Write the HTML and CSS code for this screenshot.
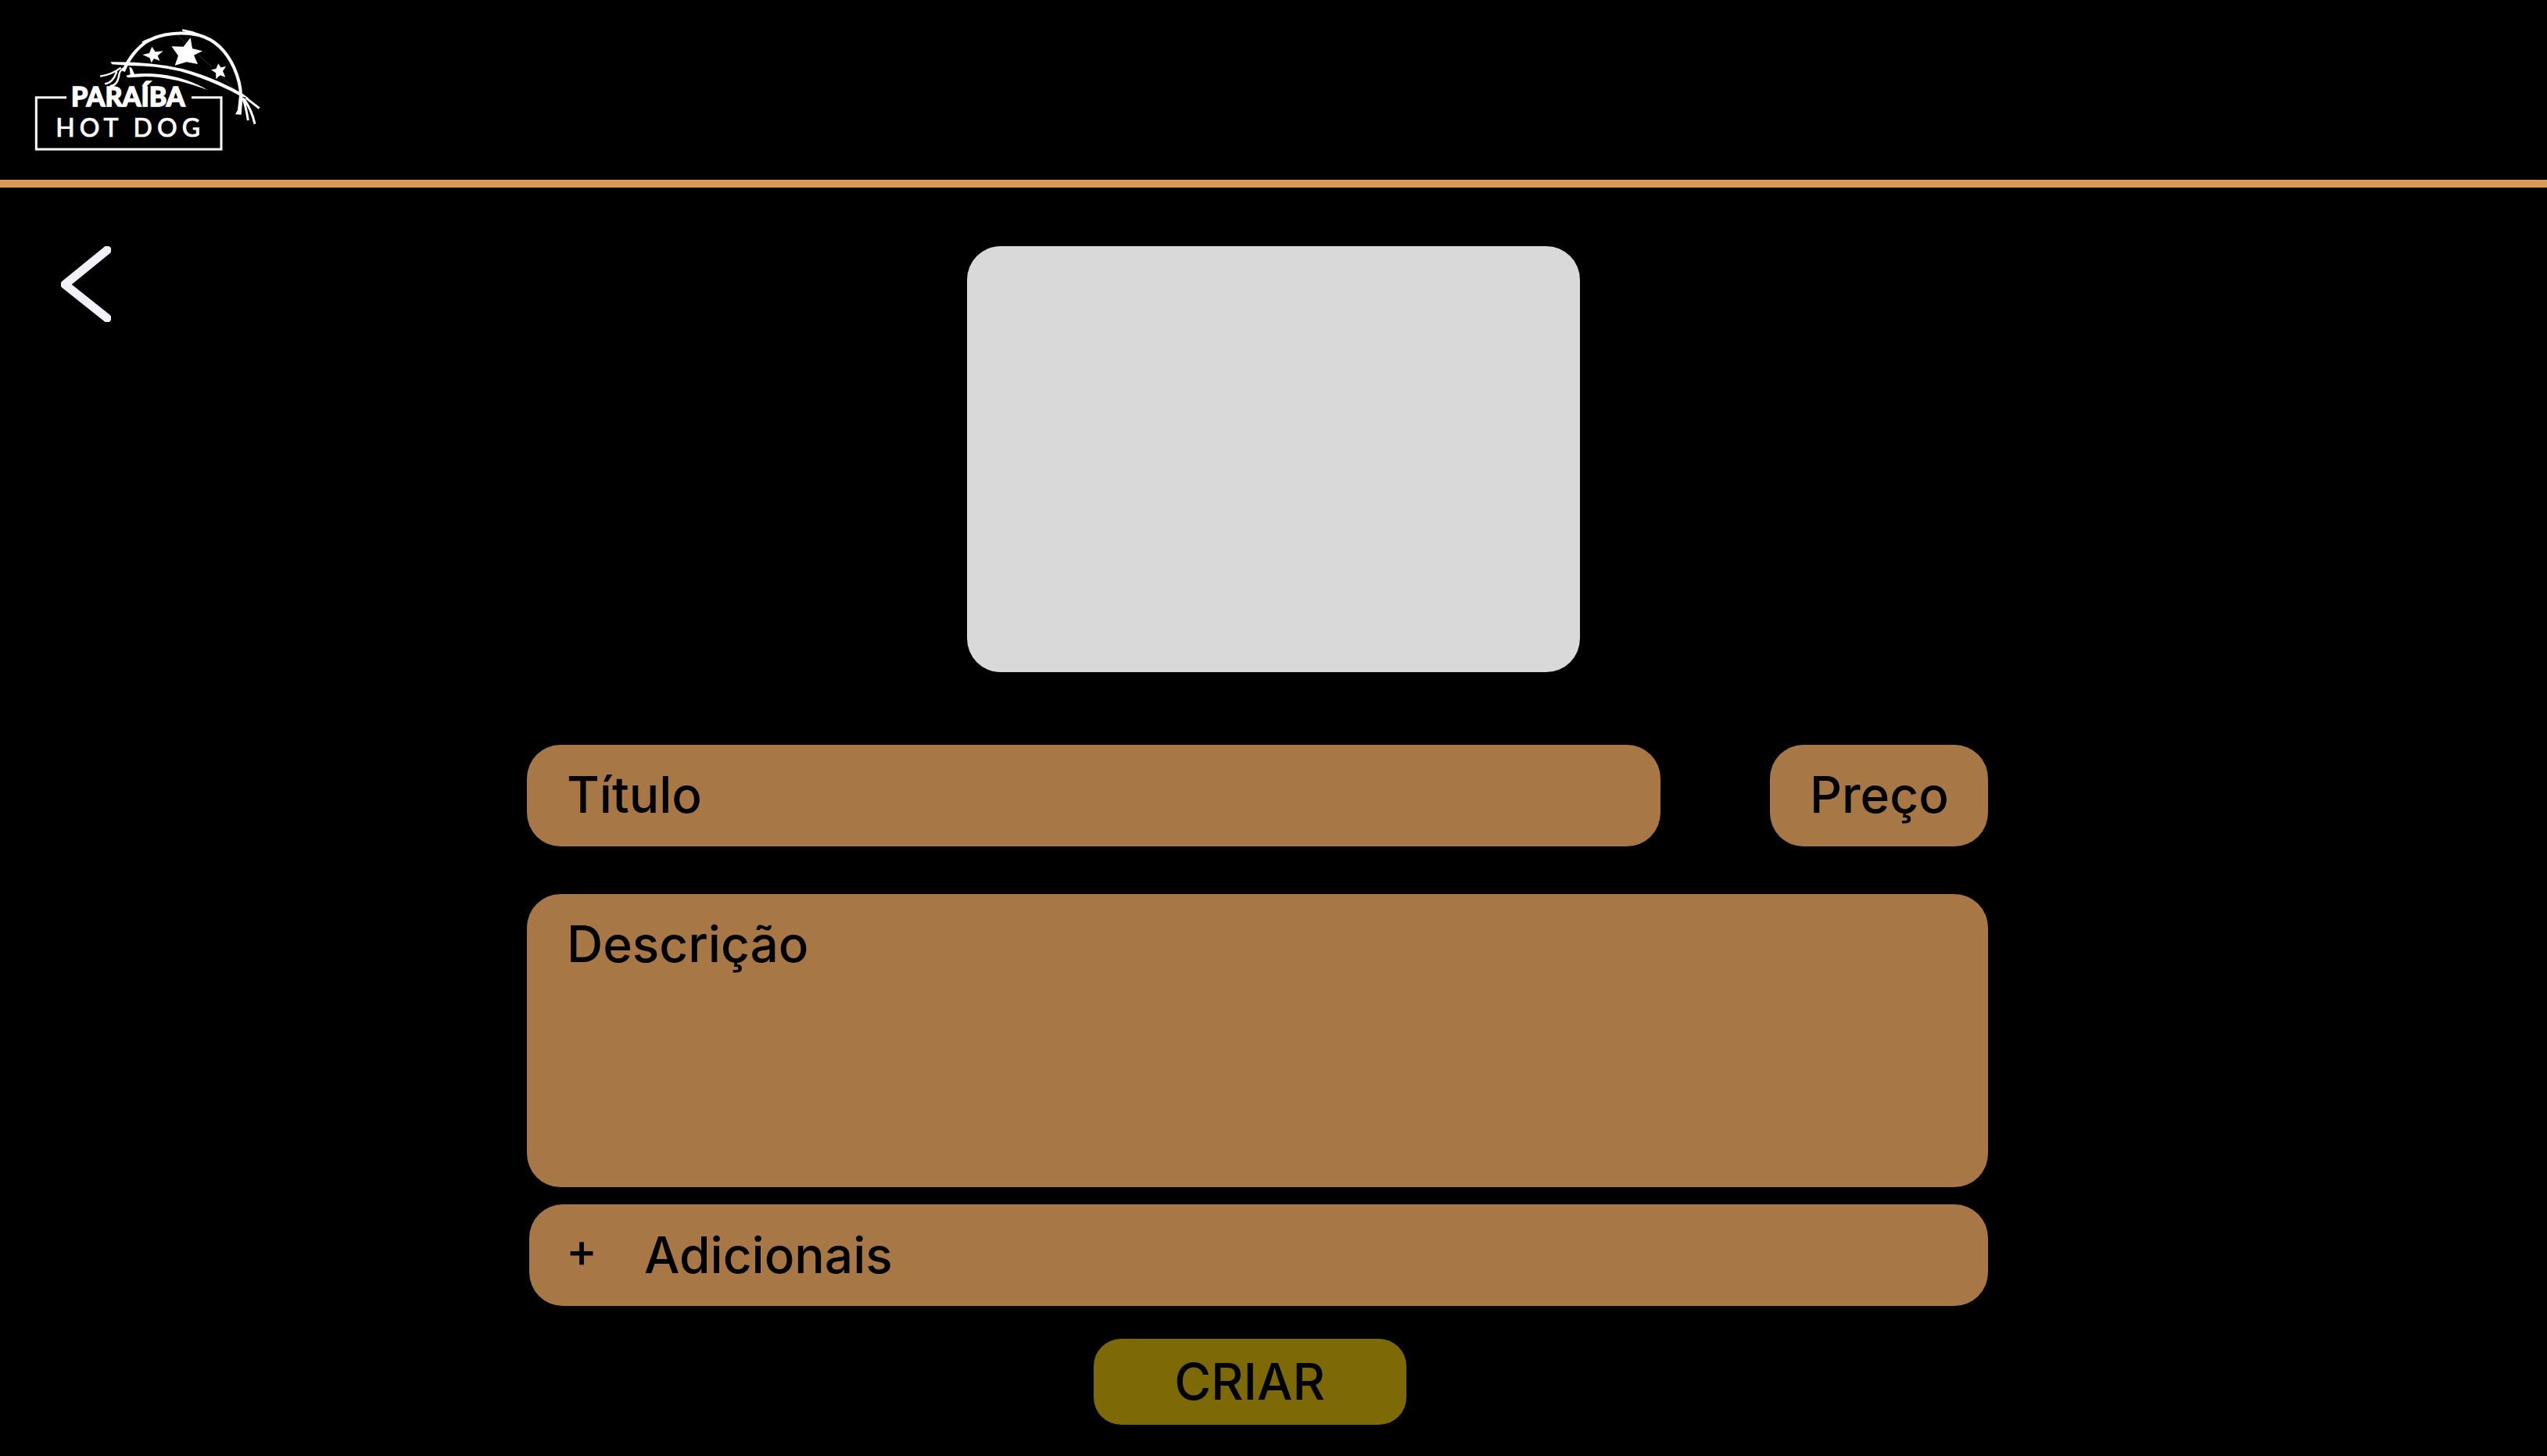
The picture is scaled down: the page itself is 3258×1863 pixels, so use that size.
FILE: index.html
```html
<!DOCTYPE html>
<html lang="pt-BR">
<head>
  <meta charset="utf-8">
  <meta name="viewport" content="width=device-width, initial-scale=1">
  <title>Paraíba Hot Dog</title>
  <link rel="stylesheet" href="styles.css">
</head>
<body>
  <header class="header">
    <svg class="logo" viewBox="0 0 990 570" role="img" aria-label="Paraíba Hot Dog">
      <g class="logo-line">
        <path stroke-width="9" d="M195 314H79V513H789V314H675"/>
        <path stroke-width="12" d="M414 214C432 165 468 122 506 98C560 66 640 62 700 74C770 92 812 142 838 200C856 240 864 280 864 310"/>
        <path stroke-width="8" d="M486 104Q510 90 534 88M640 56Q680 62 718 80"/>
        <path stroke-width="2" opacity=".3" d="M622 74L660 112M698 148L752 196M790 234L850 292"/>
        <path stroke-width="7" d="M324 233Q366 228 404 200M342 262Q374 258 388 214M362 270Q392 270 398 222Q402 208 420 198"/>
        <path stroke-width="9" d="M872 316Q884 350 892 402M876 320Q906 362 918 416M884 316Q908 334 935 356"/>
      </g>
      <g class="logo-fill">
        <path d="M364 178Q520 176 640 204Q760 236 868 298L896 318L862 308Q740 244 632 214Q540 192 440 192L370 187Z"/>
        <path d="M424 230L440 226L436 196L446 202L456 224Q610 212 738 286Q600 234 500 234L430 238Z"/>
        <path d="M858 306L872 308L866 380L843 379L852 362Z"/>
        <path d="M523 119L536 139L566 136L545 154L553 173L531 165L521 181L514 162L487 150L513 144Z"/>
        <path d="M671 85L678 126L717 136L684 152L699 186L656 178L611 191L624 154L598 118L644 119Z"/>
        <path d="M778 184L787 199L807 195L795 213L805 236L785 229L769 243L768 220L750 208L769 204Z"/>
      </g>
      <text class="logo-name" x="213" y="348">PARAÍBA</text>
      <text class="logo-sub" x="154" y="465">HOT DOG</text>
    </svg>
  </header>

  <main class="main">
    <a class="back" href="#" aria-label="Voltar">
      <svg width="64" height="97" viewBox="0 0 64 97" aria-hidden="true">
        <path d="M59 5L5 49L59 92"/>
      </svg>
    </a>
    <button class="photo" type="button" aria-label="Adicionar foto"></button>

    <form class="form">
      <div class="row">
        <input class="field title" type="text" placeholder="Título" aria-label="Título">
        <input class="field price" type="text" placeholder="Preço" aria-label="Preço">
      </div>
      <textarea class="field description" placeholder="Descrição" aria-label="Descrição"></textarea>
      <button class="field extras" type="button"><span class="plus">+</span><span>Adicionais</span></button>
      <button class="submit" type="submit">CRIAR</button>
    </form>
  </main>
</body>
</html>
```
FILE: styles.css
```css
* {
  box-sizing: border-box;
}

body {
  margin: 0;
  background: #000;
  color: #000;
  font-family: Inter, "Liberation Sans", sans-serif;
}

.header {
  padding: 20px 20px 0;
  border-bottom: 10px solid #d69a5a;
}

.logo {
  display: block;
  width: 330px;
  height: 190px;
  margin-bottom: 20px;
}

.logo-line {
  fill: none;
  stroke: #fff;
  stroke-linejoin: miter;
}

.logo-fill,
.logo-name,
.logo-sub {
  fill: #fff;
}

.logo-name,
.logo-sub {
  font-family: Lato, sans-serif;
  font-size: 96px;
}

.logo-name {
  font-size: 102px;
  font-weight: 900;
  stroke: #fff;
  stroke-width: 4px;
}

.logo-sub {
  font-weight: 500;
  letter-spacing: 18px;
  stroke: #fff;
  stroke-width: 2px;
}

.main {
  display: grid;
  grid-template-columns: 1fr minmax(0, 784px) 1fr;
  row-gap: 93px;
  padding: 75px 0 40px;
}

.back {
  justify-self: start;
  align-self: start;
  margin-left: 78px;
}

.back svg {
  display: block;
  fill: none;
  stroke: #f2f0f8;
  stroke-width: 11;
  stroke-linecap: round;
  stroke-linejoin: round;
}

.photo {
  height: 545px;
  border: 0;
  border-radius: 43px;
  background: #d9d9d9;
}

.form {
  grid-column: 1 / -1;
  justify-self: center;
  display: flex;
  flex-direction: column;
  width: 100%;
  max-width: 1910px;
  padding-right: 41px;
}

.row {
  display: flex;
  gap: 140px;
  margin-bottom: 61px;
}

.field {
  height: 130px;
  padding: 0 51px;
  border: 0;
  border-radius: 43px;
  background: #a77845;
  color: #000;
  font: 500 64px/78px Inter, "Liberation Sans", sans-serif;
}

.field::placeholder {
  color: #000;
  opacity: 1;
}

.title,
.price {
  padding-bottom: 4px;
}

.title {
  flex: 1;
  min-width: 0;
}

.price {
  width: 279px;
  padding-right: 20px;
}

.description {
  display: block;
  height: 375px;
  margin-bottom: 22px;
  padding-top: 25px;
  resize: none;
}

.extras {
  display: flex;
  align-items: center;
  gap: 60px;
  margin: 0 0 42px 3px;
  padding: 0 47px;
}

.plus {
  padding-bottom: 14px;
  font-size: 60px;
}

.submit {
  align-self: center;
  width: 400px;
  height: 110px;
  margin-right: 20px;
  border: 0;
  border-radius: 35px;
  background: #7d6a07;
  color: #000;
  font: 500 64px/78px Inter, "Liberation Sans", sans-serif;
}
```
